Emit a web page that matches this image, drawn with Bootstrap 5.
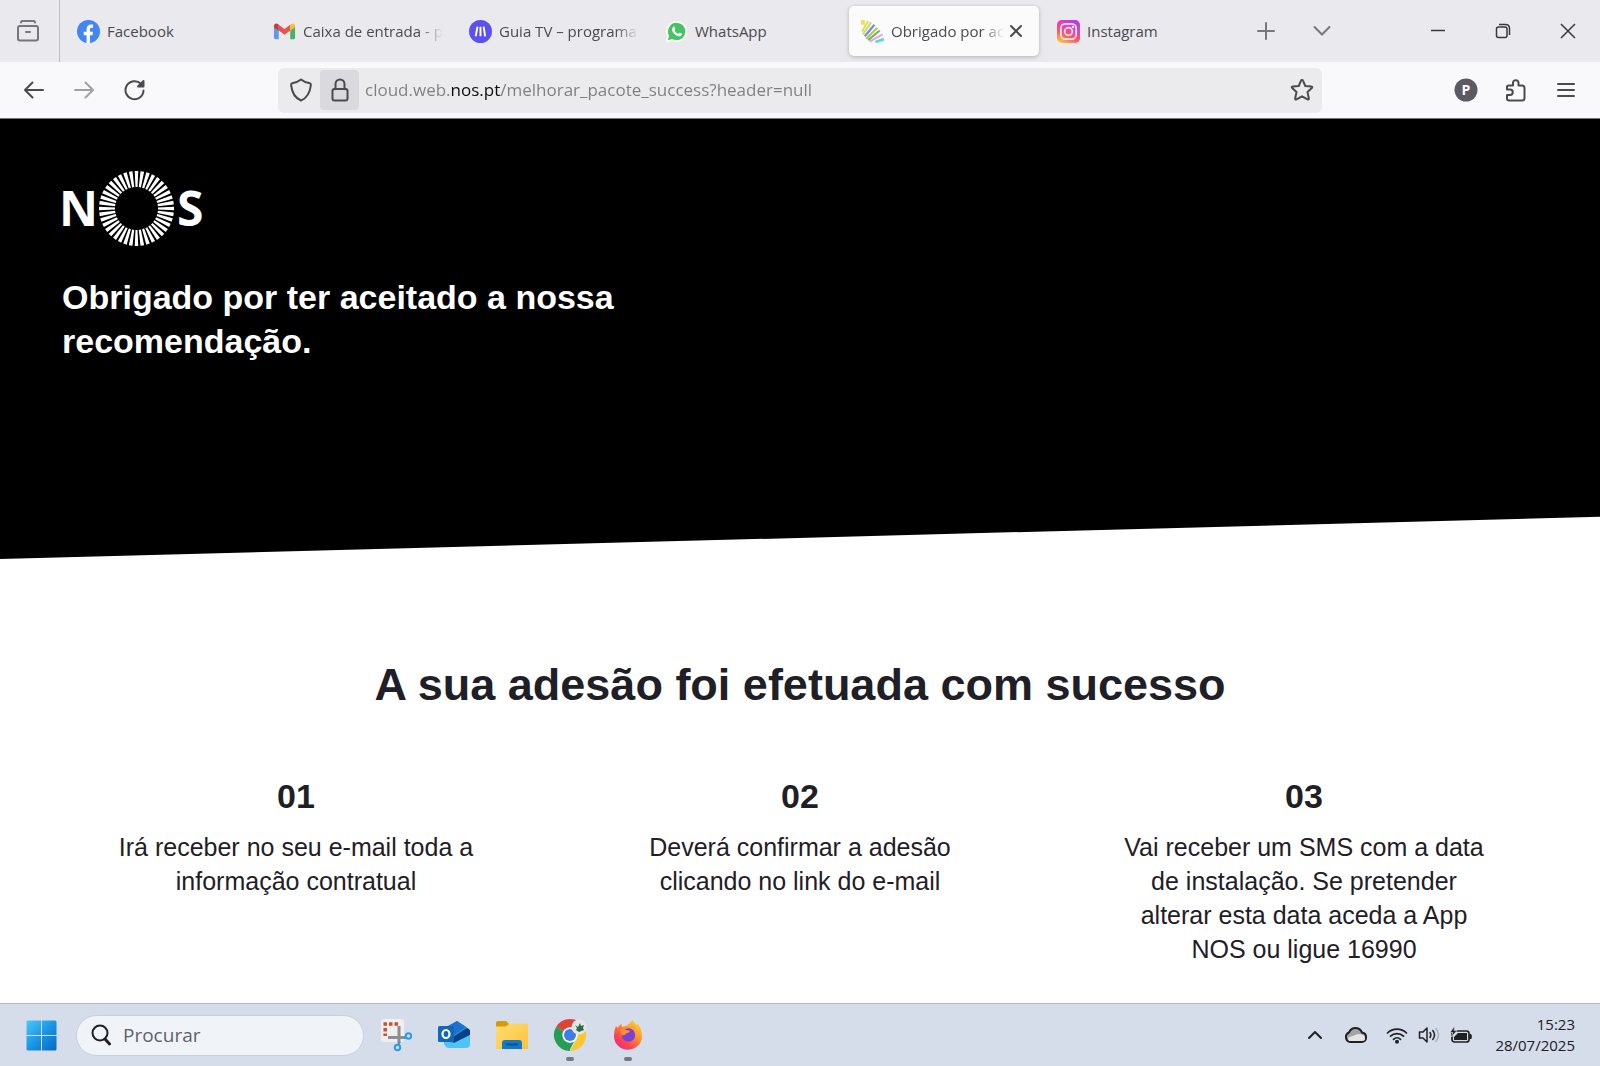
<!DOCTYPE html>
<html lang="pt">
<head>
<meta charset="utf-8">
<meta name="viewport" content="width=device-width, initial-scale=1">
<title>Obrigado por aceitar</title>
<link href="https://cdn.jsdelivr.net/npm/bootstrap@5.3.0/dist/css/bootstrap.min.css" rel="stylesheet">
<style>
  body { font-family: "Open Sans", "Noto Sans", sans-serif; color: #4a4a50; background: #fff; }
  svg { display: block; flex: none; }
  button { background: none; border: 0; padding: 0; color: inherit; }
  .line { fill: none; stroke: currentColor; stroke-linecap: round; stroke-linejoin: round; stroke-width: 2; }

  /* tab strip */
  .tabstrip { height: 62px; background: #eae9ed; }
  .overview { width: 60px; border-right: 1px solid #bdbcc2; color: #77767c; padding-right: 4px; }
  .tablist { gap: 6px; padding-left: 5px; min-width: 0; }
  .tab { flex: 0 1 190px; min-width: 0; height: 50px; padding: 0 8px 0 12px; border-radius: 5px; font-size: 15px; color: #4a4a50; text-decoration: none; }
  .tab > svg { margin-right: 7px; }
  .tab.current { background: #fbfbfb; box-shadow: 0 1px 4px rgba(0,0,0,.25); padding-right: 12px; }
  .tab-title { flex: 1 1 0; min-width: 0; overflow: hidden; white-space: nowrap; }
  .faded { -webkit-mask-image: linear-gradient(to left, transparent, #000 24px); mask-image: linear-gradient(to left, transparent, #000 24px); }
  .strip-btn { width: 50px; height: 50px; color: #77767c; }
  .win-btn { width: 65px; height: 60px; color: #38383d; }

  /* address bar */
  .toolbar { height: 57px; background: #f9f9fb; border-bottom: 1px solid #77767c; color: #4a4a50; }
  .side { width: 278px; padding: 0 9px; }
  .nav-btn { width: 50px; height: 48px; }
  .address { flex: 1 1 auto; min-width: 0; height: 45px; background: #ebebed; border-radius: 6px; padding: 0 1px 0 3px; }
  .shield, .lock, .star { width: 39px; height: 40px; }
  .lock { background: #dadade; border-radius: 4px; }
  .url { flex: 1 1 auto; min-width: 0; border: 0; outline: 0; padding: 0; margin-left: 6px; font-size: 17px; color: #7d7d82;
    background: linear-gradient(to right, #7d7d82 85px, #0c0c10 85px, #0c0c10 136px, #7d7d82 136px);
    -webkit-background-clip: text; background-clip: text; -webkit-text-fill-color: transparent; }

  /* page */
  .page { font-family: "Liberation Sans", Arial, sans-serif; color: #1f2027; }
  .hero { height: 440px; background: #000; color: #fff; padding: 50px 62px; clip-path: polygon(0 0, 100% 0, 100% 90.4%, 0 100%); }
  .hero h1 { font-size: 34px; line-height: 44px; font-weight: 700; max-width: 600px; margin: 28px 0 0; }
  .brand-text { font: 700 48px "Open Sans", sans-serif; fill: #fff; }
  .result { padding: 99px 44px 0; }
  .result h2 { font-size: 45px; line-height: 54px; font-weight: 700; margin: 0 0 64px; }
  .result h3 { font-size: 34px; line-height: 40px; font-weight: 700; margin: 0 0 14px; }
  .result p { font-size: 25px; line-height: 34px; margin: 0 auto; max-width: 380px; }

  /* taskbar */
  .taskbar { height: 63px; background: #d5ddea; border-top: 1px solid #b3b8c4; color: #202024; padding: 0 25px; }
  .search { width: 288px; height: 41px; margin-left: 18px; background: #f0f4f9; border-radius: 21px; border: 1px solid #c8cfdb; padding: 0 14px; gap: 12px; }
  .search input { border: 0; outline: 0; background: none; font-size: 19px; min-width: 0; padding: 0; color: #202024; }
  .search input::placeholder { color: #606269; opacity: 1; }
  .apps { margin-left: 3px; }
  .app { width: 58px; height: 62px; position: relative; }
  .app.running::after { content: ""; position: absolute; bottom: 5px; width: 8px; height: 4px; border-radius: 2px; background: #75797f; }
  .tray-btn { width: 32px; height: 40px; }
  .tray-wide { width: 50px; height: 40px; }
  .clock { font-size: 15px; line-height: 21px; width: 98px; }
</style>
</head>
<body class="min-vh-100 d-flex flex-column">

<header>
  <div class="tabstrip d-flex align-items-center">
    <button class="overview h-100 d-flex align-items-center justify-content-center" aria-label="Vista de separadores">
      <svg class="line" width="24" height="24" viewBox="0 0 24 24"><path d="M5 3.500Q5 2 6.500 2h11Q19 2 19 3.500"/><rect x="2" y="7" width="20" height="14.500" rx="2"/><path d="M10 13h4"/></svg>
    </button>
    <nav class="tablist d-flex flex-grow-1 align-items-center">
      <a class="tab d-flex align-items-center" href="#">
        <svg width="23" height="23" viewBox="0 0 24 24"><circle cx="12" cy="12" r="12" fill="#4285f4"/><path fill="#fff" d="M10 24v-8.200H7v-3.500h3V9.700c0-3.300 1.800-5.100 4.800-5.100 1 0 2 .2 2 .2V8h-1.400c-1.500 0-1.900.9-1.900 1.900v2.400h3.200l-.5 3.500h-2.700V24z"/></svg>
        <span class="tab-title">Facebook</span>
      </a>
      <a class="tab d-flex align-items-center" href="#">
        <svg width="23" height="23" viewBox="0 0 24 24"><path fill="#5f98ee" d="M1 6l5 4v10H2.500Q1 20 1 18.500z"/><path fill="#4bb163" d="M23 6l-5 4v10h3.500q1.500 0 1.500-1.500z"/><path fill="#e5554c" d="M6 5l6 4.500L18 5v6l-6 4.500L6 11z"/><path fill="#c53b35" d="M1 6.500C1 3.500 4 2.800 6 5v6L1 7.500z"/><path fill="#f6c22e" d="M23 6.500c0-3-3-3.700-5-1.500v6l5-3.500z"/></svg>
        <span class="tab-title faded">Caixa de entrada - p</span>
      </a>
      <a class="tab d-flex align-items-center" href="#">
        <svg width="23" height="23" viewBox="0 0 24 24"><circle cx="12" cy="12" r="12" fill="#5b50f0"/><path d="M8.800 7L7 17M12 7v10M15.300 7l1.500 10" stroke="#fff" stroke-width="2" fill="none"/></svg>
        <span class="tab-title faded">Guia TV – programa</span>
      </a>
      <a class="tab d-flex align-items-center" href="#">
        <svg width="23" height="23" viewBox="0 0 24 24"><path fill="#fafafa" d="M12 1a11 11 0 1 1-5 20.800L.8 23.200 2.200 17A11 11 0 0 1 12 1z"/><path fill="#45c465" d="M12.200 3a9 9 0 1 1-4.500 16.800L3 21.200l1.300-4.700A9 9 0 0 1 12.200 3z"/><path fill="#fff" d="M8.600 7.200c.6-.5 1.200-.3 1.400.2l.8 1.900c.2.500-.8 1.300-.8 1.700.8 1.600 2 2.700 3.700 3.400.5 0 1.200-1.400 1.700-1.200l2 1c.6.300.2 1.600-.5 2.200-1 .8-2.400.8-4.300 0-2.600-1.100-4.300-3.200-5-5-.5-1.800-.2-3.200 1-4.200z"/></svg>
        <span class="tab-title">WhatsApp</span>
      </a>
      <div class="tab current d-flex align-items-center">
        <svg width="23" height="23" viewBox="0 0 24 24" fill="none" stroke-width="2.200"><path stroke="#f7d95c" stroke-width="4" d="M2 0v5"/><path stroke="#e3e04a" d="M7.500 1L1 12"/><path stroke="#c3dd84" d="M10.500 2.500L2 15"/><path stroke="#7b86d8" d="M14 5L4 17"/><path stroke="#a4cf4e" d="M17 8L5.500 19.500"/><path stroke="#7fae6a" d="M19.500 11L7.500 21"/><path stroke="#e2a6dc" d="M22.500 15L9 22.500"/><path stroke="#62dcc8" stroke-width="3" d="M24 20l-9 3"/></svg>
        <a class="tab-title faded text-reset text-decoration-none" href="#">Obrigado por ace</a>
        <button aria-label="Fechar separador"><svg class="line" width="22" height="22" viewBox="0 0 22 22"><path d="M6 6l10 10M16 6L6 16"/></svg></button>
      </div>
      <a class="tab d-flex align-items-center" href="#">
        <svg width="23" height="23" viewBox="0 0 24 24"><defs><linearGradient id="ig" x1="0.200" y1="1" x2="0.700" y2="0"><stop offset="0" stop-color="#fdc83c"/><stop offset=".35" stop-color="#fb5a60"/><stop offset=".65" stop-color="#ee3fb4"/><stop offset="1" stop-color="#b23df0"/></linearGradient></defs><rect width="24" height="24" rx="5" fill="url(#ig)"/><g fill="none" stroke="#ffe9f4" stroke-width="1.800"><rect x="4" y="4" width="16" height="16" rx="4.500"/><circle cx="12" cy="12" r="4"/></g><circle cx="16.700" cy="7.300" r="1.200" fill="#fff"/></svg>
        <span class="tab-title">Instagram</span>
      </a>
      <button class="strip-btn d-flex align-items-center justify-content-center" aria-label="Novo separador"><svg class="line" width="18" height="18" viewBox="0 0 18 18"><path d="M9 1v16M1 9h16"/></svg></button>
      <button class="strip-btn d-flex align-items-center justify-content-center" aria-label="Listar separadores"><svg class="line" width="18" height="18" viewBox="0 0 18 18"><path d="M1.500 5L9 12.500 16.500 5"/></svg></button>
    </nav>
    <div class="d-flex">
      <button class="win-btn d-flex align-items-center justify-content-center" aria-label="Minimizar"><svg width="16" height="16" viewBox="0 0 16 16" fill="none" stroke="currentColor" stroke-width="1.500"><path d="M1 7.500h14"/></svg></button>
      <button class="win-btn d-flex align-items-center justify-content-center" aria-label="Restaurar"><svg width="16" height="16" viewBox="0 0 16 16" fill="none" stroke="currentColor" stroke-width="1.500"><rect x="1.500" y="4" width="10.500" height="10.500" rx="2"/><path d="M4 1.500h6.500Q14.500 1.500 14.500 5.500V12"/></svg></button>
      <button class="win-btn d-flex align-items-center justify-content-center" aria-label="Fechar"><svg width="16" height="16" viewBox="0 0 16 16" fill="none" stroke="currentColor" stroke-width="1.500"><path d="M1 1l14 14M15 1L1 15"/></svg></button>
    </div>
  </div>

  <div class="toolbar d-flex align-items-center">
    <div class="side d-flex">
      <button class="nav-btn d-flex align-items-center justify-content-center" aria-label="Recuar"><svg class="line" width="22" height="22" viewBox="0 0 22 22"><path d="M20 11H2M9.500 3.500L2 11l7.500 7.500"/></svg></button>
      <button class="nav-btn d-flex align-items-center justify-content-center opacity-50" aria-label="Avançar"><svg class="line" width="22" height="22" viewBox="0 0 22 22"><path d="M2 11h18M12.500 3.500L20 11l-7.500 7.500"/></svg></button>
      <button class="nav-btn d-flex align-items-center justify-content-center" aria-label="Recarregar"><svg class="line" width="22" height="22" viewBox="0 0 22 22"><path d="M20.500 11.500A9 9 0 1 1 18 5"/><path fill="currentColor" d="M20.500 2v5.500H15z"/></svg></button>
    </div>
    <div class="address d-flex align-items-center">
      <button class="shield d-flex align-items-center justify-content-center" aria-label="Proteção"><svg class="line" width="22" height="24" viewBox="0 0 22 24"><path d="M11 1.500C8.500 3.500 5 4.800 2.200 5.300 1.200 5.500 1 6 1.200 7.500 2 14.500 5 20 11 22.500c6-2.500 9-8 9.800-15 .2-1.500 0-2-1-2.200C17 4.800 13.500 3.500 11 1.500z"/></svg></button>
      <button class="lock d-flex align-items-center justify-content-center" aria-label="Ligação segura"><svg class="line" width="18" height="24" viewBox="0 0 18 24"><rect x="1.500" y="11" width="15" height="11.500" rx="2"/><path d="M4.500 11V6a4.500 4.500 0 0 1 9 0v5"/></svg></button>
      <input class="url" type="text" aria-label="Endereço" value="cloud.web.nos.pt/melhorar_pacote_success?header=null">
      <button class="star d-flex align-items-center justify-content-center flex-shrink-0" aria-label="Adicionar aos marcadores"><svg class="line" width="24" height="24" viewBox="0 0 24 24"><path d="M12 2q.8 0 1.100.8l2.200 5.200 6 .6q1.600.3.500 1.500l-4.300 4 1.300 6.200q.2 1.700-1.300 1.100L12 18.300l-5.500 3.100q-1.500.6-1.300-1.100l1.300-6.200-4.300-4q-1.100-1.200.5-1.500l6-.6 2.200-5.200Q11.200 2 12 2z"/></svg></button>
    </div>
    <div class="side d-flex justify-content-end">
      <button class="nav-btn d-flex align-items-center justify-content-center" aria-label="Perfil"><svg width="24" height="24" viewBox="0 0 24 24"><circle cx="12" cy="12" r="11.500" fill="#5b5a64"/><text x="12" y="17" text-anchor="middle" font-size="14" font-weight="700" fill="#fff">P</text></svg></button>
      <button class="nav-btn d-flex align-items-center justify-content-center" aria-label="Extensões"><svg class="line" width="22" height="24" viewBox="0 0 22 24"><path d="M3.500 7.500H8V4.500a2.800 2.800 0 0 1 5.500 0v3H17q2.500 0 2.500 2.500V20q0 2.500-2.500 2.500H4Q2 22.500 2 20.500V17h3a2.500 2.500 0 0 0 0-5.500H2V9Q2 7.500 3.500 7.500z"/></svg></button>
      <button class="nav-btn d-flex align-items-center justify-content-center" aria-label="Menu"><svg class="line" width="18" height="18" viewBox="0 0 18 18"><path d="M1 3h16M1 9h16M1 15h16"/></svg></button>
    </div>
  </div>
</header>

<main class="page flex-grow-1">
  <section class="hero">
    <svg width="142" height="78" viewBox="62 169 142 78" role="img" aria-label="NOS">
      <text class="brand-text" x="59" y="226">N</text>
      <circle cx="136.500" cy="208.500" r="29.500" fill="none" stroke="#fff" stroke-width="16" pathLength="400" stroke-dasharray="6.200 3.800" stroke-dashoffset="3.100"/>
      <text class="brand-text" x="177" y="226">S</text>
    </svg>
    <h1>Obrigado por ter aceitado a nossa recomendação.</h1>
  </section>
  <section class="result text-center">
    <h2>A sua adesão foi efetuada com sucesso</h2>
    <div class="row g-0">
      <div class="col-4">
        <h3>01</h3>
        <p>Irá receber no seu e-mail toda a informação contratual</p>
      </div>
      <div class="col-4">
        <h3>02</h3>
        <p>Deverá confirmar a adesão clicando no link do e-mail</p>
      </div>
      <div class="col-4">
        <h3>03</h3>
        <p>Vai receber um SMS com a data de instalação. Se pretender alterar esta data aceda a App NOS ou ligue 16990</p>
      </div>
    </div>
  </section>
</main>

<footer class="taskbar d-flex align-items-center">
  <button aria-label="Iniciar"><svg width="33" height="33" viewBox="0 0 33 33"><defs><linearGradient id="win" x1="0" y1="0" x2="1" y2="1"><stop offset="0" stop-color="#4cc9fb"/><stop offset=".5" stop-color="#1996e4"/><stop offset="1" stop-color="#0569c6"/></linearGradient></defs><path fill="url(#win)" d="M3 1.500h13v14.500H1.500V3Q1.500 1.500 3 1.500zM17 1.500h13q1.500 0 1.500 1.500v13H17zM1.500 17H16v14.500H3q-1.500 0-1.500-1.500zM17 17h14.500v13q0 1.500-1.500 1.500H17z"/></svg></button>
  <div class="search d-flex align-items-center">
    <svg class="line" width="20" height="22" viewBox="0 0 20 22"><circle cx="9" cy="9" r="7.500"/><path d="M14 15l4.500 5" stroke-width="3"/></svg>
    <input class="flex-grow-1" type="search" id="procurar" placeholder="Procurar" aria-label="Procurar">
  </div>
  <div class="apps d-flex">
    <button class="app d-flex align-items-center justify-content-center" aria-label="Ferramenta de Recorte"><svg width="32" height="34" viewBox="0 0 32 34"><rect x="1" y="1" width="23" height="23" rx="3" fill="#f0eeee"/><path d="M3.500 6H18M5.200 10v8" fill="none" stroke="#c8502a" stroke-width="3.500" stroke-dasharray="3.500 2"/><path d="M19 8v17M8 19.500h18" stroke="#8a8d91" stroke-width="3"/><g fill="none" stroke="#2e9be0" stroke-width="2"><circle cx="28.500" cy="18" r="2.700"/><circle cx="17.500" cy="29.500" r="2.700"/><path d="M18.500 27l1-3M24 20l2.500-1"/></g></svg></button>
    <button class="app d-flex align-items-center justify-content-center" aria-label="Outlook"><svg width="34" height="32" viewBox="0 0 34 32"><path fill="#2b8de4" d="M7 9L20 2l12 8v12L16 28 7 25z"/><path fill="#1a73cf" d="M10 8l10-6 9 6-15 10z"/><path fill="#0b3f86" d="M13 20L30 9l3 2v5L17 24z"/><path fill="#4cc5f5" d="M7 22l10 2 16-8v9q0 4-4 4H12q-5 0-5-7z"/><rect x="1" y="7" width="16" height="16" rx="1.500" fill="#1267bd"/><ellipse cx="9" cy="15" rx="3.500" ry="4" fill="none" stroke="#fff" stroke-width="2.200"/></svg></button>
    <button class="app d-flex align-items-center justify-content-center" aria-label="Explorador de Ficheiros"><svg width="34" height="32" viewBox="0 0 34 32"><defs><linearGradient id="fold" x1="0" y1="0" x2="1" y2="1"><stop offset="0" stop-color="#ffdc72"/><stop offset="1" stop-color="#fbc33c"/></linearGradient></defs><path fill="#d79a0a" d="M1 4q0-2 2-2h8l3 3v4H1z"/><path fill="url(#fold)" d="M1 7.500h10L14.500 4.500H31q2 0 2 2V30H1z"/><path fill="#1478c8" d="M7 30v-6q0-3 3-3h14q3 0 3 3v6z"/><path d="M11 25.500h12" stroke="#0c4f94" stroke-width="2"/></svg></button>
    <button class="app running d-flex align-items-center justify-content-center" aria-label="Chrome"><svg width="34" height="34" viewBox="0 0 34 34"><path fill="#de4437" d="M17 17L3.100 9A16 16 0 0 1 30.900 9z"/><path fill="#279c54" d="M17 17v16A16 16 0 0 1 3.100 9z"/><path fill="#fdc72f" d="M17 17L30.900 9A16 16 0 0 1 17 33l7-12z"/><path fill="#279c54" d="M11 20L3.100 9 17 25l5-3-6 11z"/><circle cx="17" cy="17" r="7.700" fill="#fff"/><circle cx="17" cy="17" r="6" fill="#3e7de8"/><circle cx="26" cy="9" r="7.500" fill="#e3e8e4"/><path fill="#2f6b46" d="M22 7l3 2 2-4 1 3 3-1-1 3 1 2-5 2-3-2 1-2z"/></svg></button>
    <button class="app running d-flex align-items-center justify-content-center" aria-label="Firefox"><svg width="32" height="34" viewBox="0 0 32 34"><defs><linearGradient id="fx" x1="1" y1="0" x2=".2" y2="1"><stop offset="0" stop-color="#ffe03c"/><stop offset=".4" stop-color="#ff9a2b"/><stop offset=".75" stop-color="#fb4550"/><stop offset="1" stop-color="#e72c85"/></linearGradient></defs><path fill="url(#fx)" d="M4 8l1.500 2Q7 7 9.500 6l.5 3 5-1.500Q18 6 20.500 2q2 3 4 5 1-.5 1-1.500Q30 11 30 18A14 13.500 0 0 1 2 18.500Q2 12 4 8z"/><circle cx="16.500" cy="17" r="6.700" fill="#7a40d6"/><path fill="#ff8f2b" d="M8 12q4-2 6 0 3 0 4 1-1 2-4 2.500Q13 18 10 17z"/></svg></button>
  </div>
  <div class="d-flex align-items-center ms-auto">
    <button class="tray-btn d-flex align-items-center justify-content-center" aria-label="Mostrar ícones ocultos"><svg class="line" width="16" height="16" viewBox="0 0 16 16"><path d="M2 11l6-6 6 6"/></svg></button>
    <button class="tray-wide d-flex align-items-center justify-content-center" aria-label="OneDrive"><svg width="24" height="18" viewBox="0 0 24 18"><path fill="#a3a5a8" stroke="#202024" stroke-width="2" d="M6 16a5 5 0 0 1-1-9.500Q7 2 11.500 2T18 6.500A4.800 4.800 0 0 1 18 16z"/><path fill="#e5e5e6" d="M5.500 15q-2-1-1-3.500L14 8q7 0 7 4.500 0 2.500-3 2.500z"/></svg></button>
    <button class="tray-btn d-flex align-items-center justify-content-center" aria-label="Wi-Fi"><svg class="line" width="22" height="18" viewBox="0 0 22 18"><g stroke-width="1.700"><path d="M1.500 7a13.500 13.500 0 0 1 19 0M4.500 10.200a9.300 9.300 0 0 1 13 0M7.500 13.300a5 5 0 0 1 7 0"/></g><circle cx="11" cy="15.700" r="1" fill="currentColor"/></svg></button>
    <button class="tray-btn d-flex align-items-center justify-content-center" aria-label="Volume"><svg width="22" height="18" viewBox="0 0 22 18" fill="none" stroke="currentColor" stroke-width="1.500" stroke-linecap="round" stroke-linejoin="round"><path d="M1.500 6H5l4-4v14l-4-4H1.500z"/><path d="M12 6.500q1.800 2.500 0 5M14.800 4.500q3.500 4.500 0 9"/><path stroke="#aab0ba" d="M18 2.500q5 6.500 0 13"/></svg></button>
    <button class="tray-btn d-flex align-items-center justify-content-center" aria-label="Bateria"><svg width="22" height="18" viewBox="0 0 22 18"><rect x="2" y="5" width="17" height="11" rx="2.500" fill="none" stroke="currentColor" stroke-width="1.700"/><path fill="currentColor" d="M8 7h9v7H4v-3zM19.500 8h1q1.300 0 1.300 1.500v2q0 1.500-1.300 1.500h-1z"/><path fill="currentColor" stroke="#d5ddea" stroke-width=".7" d="M4.500 0L0 6.500h2.800L1.500 11 7 4.500H4.200z"/></svg></button>
    <time class="clock text-end" datetime="2025-07-28T15:23">15:23<br>28/07/2025</time>
  </div>
</footer>

<script src="https://cdn.jsdelivr.net/npm/bootstrap@5.3.0/dist/js/bootstrap.bundle.min.js"></script>
</body>
</html>
